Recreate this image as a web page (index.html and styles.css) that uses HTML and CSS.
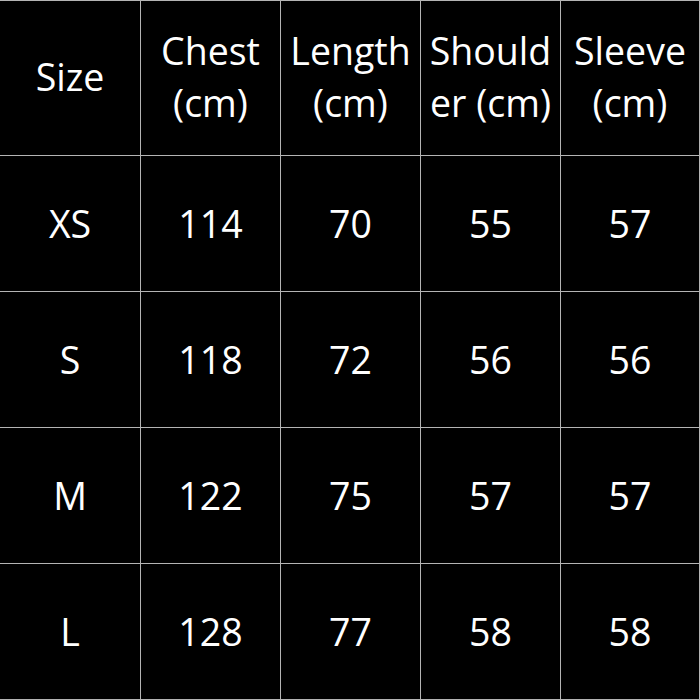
FILE: index.html
```html
<!DOCTYPE html>
<html>
<head>
<meta charset="utf-8">
<link rel="stylesheet" href="styles.css">
</head>
<body>
<div class="table">
  <div class="cell head">Size</div>
  <div class="cell head">Chest (cm)</div>
  <div class="cell head">Length (cm)</div>
  <div class="cell head">Should<wbr>er (cm)</div>
  <div class="cell head">Sleeve (cm)</div>

  <div class="cell">XS</div>
  <div class="cell">114</div>
  <div class="cell">70</div>
  <div class="cell">55</div>
  <div class="cell">57</div>

  <div class="cell">S</div>
  <div class="cell">118</div>
  <div class="cell">72</div>
  <div class="cell">56</div>
  <div class="cell">56</div>

  <div class="cell">M</div>
  <div class="cell">122</div>
  <div class="cell">75</div>
  <div class="cell">57</div>
  <div class="cell">57</div>

  <div class="cell">L</div>
  <div class="cell">128</div>
  <div class="cell">77</div>
  <div class="cell">58</div>
  <div class="cell">58</div>
</div>
</body>
</html>
```
FILE: styles.css
```css
html, body {
  margin: 0;
  padding: 0;
  background: #000;
}
.table {
  width: 700px;
  height: 700px;
  box-sizing: border-box;
  display: grid;
  grid-template-columns: 140px 139px 139px 139px 138px;
  grid-template-rows: 154px 135px 135px 135px 135px;
  gap: 1px;
  background: #b4b4b4;
  border-top: 1px solid #b4b4b4;
  border-right: 1px solid #b4b4b4;
  border-bottom: 1px solid #b4b4b4;
}
.cell {
  background: #000;
  color: #fff;
  font-family: "Open Sans", sans-serif;
  font-size: 37.5px;
  line-height: 52px;
  display: flex;
  align-items: center;
  justify-content: center;
  text-align: center;
  padding: 0 1px;
}
.head {
  padding-bottom: 2px;
}
```
